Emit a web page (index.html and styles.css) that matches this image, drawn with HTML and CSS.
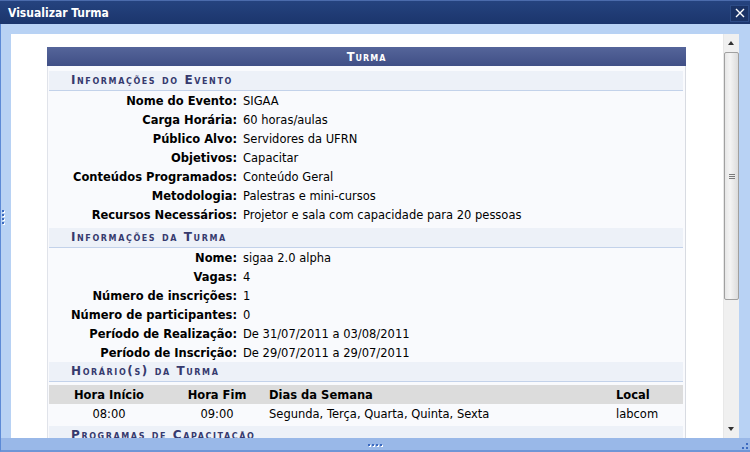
FILE: index.html
```html
<!DOCTYPE html>
<html>
  <head>
    <meta charset="utf-8" />
    <title>Visualizar Turma</title>
    <link rel="stylesheet" href="styles.css">
  </head>
  <body>
    <div class="window">
      <div class="titlebar">
        <span class="title">Visualizar Turma</span>
        <span class="close">
          <svg width="10" height="10" viewBox="0 0 10 10"><path d="M1 1L9 9M9 1L1 9" stroke="#fff" stroke-width="1.4"/></svg>
        </span>
      </div>

      <div class="frame">
        <span class="grip-left"><i></i><i></i><i></i><i></i></span>
        <div class="viewport">
          <div class="content">
            <div class="formulario">
              <div class="caption">Turma</div>
              <div class="corpo">
                <div class="subtitulo">Informações do Evento</div>
                <table class="dados">
                  <tr><th>Nome do Evento:</th><td>SIGAA</td></tr>
                  <tr><th>Carga Horária:</th><td>60 horas/aulas</td></tr>
                  <tr><th>Público Alvo:</th><td>Servidores da UFRN</td></tr>
                  <tr><th>Objetivos:</th><td>Capacitar</td></tr>
                  <tr><th>Conteúdos Programados:</th><td>Conteúdo Geral</td></tr>
                  <tr><th>Metodologia:</th><td>Palestras e mini-cursos</td></tr>
                  <tr><th>Recursos Necessários:</th><td>Projetor e sala com capacidade para 20 pessoas</td></tr>
                </table>

                <div class="subtitulo">Informações da Turma</div>
                <table class="dados ultimo">
                  <tr><th>Nome:</th><td>sigaa 2.0 alpha</td></tr>
                  <tr><th>Vagas:</th><td>4</td></tr>
                  <tr><th>Número de inscrições:</th><td>1</td></tr>
                  <tr><th>Número de participantes:</th><td>0</td></tr>
                  <tr><th>Período de Realização:</th><td>De 31/07/2011 a 03/08/2011</td></tr>
                  <tr><th>Período de Inscrição:</th><td>De 29/07/2011 a 29/07/2011</td></tr>
                </table>

                <div class="subtitulo">Horário(s) da Turma</div>
                <table class="listagem">
                  <thead>
                    <tr>
                      <th class="c1">Hora Início</th>
                      <th class="c2">Hora Fim</th>
                      <th class="c3">Dias da Semana</th>
                      <th class="c4">Local</th>
                    </tr>
                  </thead>
                  <tbody>
                    <tr>
                      <td class="c1">08:00</td>
                      <td class="c2">09:00</td>
                      <td class="c3">Segunda, Terça, Quarta, Quinta, Sexta</td>
                      <td class="c4">labcom</td>
                    </tr>
                  </tbody>
                </table>

                <div class="subtitulo">Programas de Capacitação</div>
              </div>
            </div>
          </div>

          <div class="scrollbar">
            <div class="arrow up"></div>
            <div class="track">
              <div class="thumb"><span class="lines"></span></div>
            </div>
            <div class="arrow down"></div>
          </div>
        </div>
      </div>

      <div class="statusbar">
        <span class="grip-bottom"><i></i><i></i><i></i><i></i></span>
        <span class="grip-corner"></span>
      </div>
    </div>
  </body>
</html>
```

FILE: styles.css
```css
html, body {
  margin: 0;
  padding: 0;
}

body {
  font-family: "DejaVu Sans", Verdana, sans-serif;
  font-size: 11.5px;
  color: #000;
}

.window {
  width: 750px;
  height: 452px;
  display: flex;
  flex-direction: column;
  overflow: hidden;
}

/* title bar */
.titlebar {
  height: 24px;
  box-sizing: border-box;
  border-top: 1px solid #4b6bac;
  background: linear-gradient(#25437f, #1b356c);
  display: flex;
  align-items: center;
  justify-content: space-between;
  padding: 0 1px 0 8px;
}
.title {
  color: #fff;
  font-weight: bold;
  font-size: 12px;
  font-family: "DejaVu Sans Condensed", "DejaVu Sans", sans-serif;
}
.close {
  width: 17px;
  height: 15px;
  background: #1a3265;
  border: 1px solid #2c4b86;
  display: flex;
  align-items: center;
  justify-content: center;
  margin-top: 1px;
}

/* frame */
.frame {
  flex: 1;
  display: flex;
  min-height: 0;
  background: #b8d2f4;
  border-left: 1px solid #5c8ad6;
  padding: 10px 11px 0 10px;
  position: relative;
}
.grip-left {
  position: absolute;
  left: 1px;
  top: 186px;
  display: flex;
  flex-direction: column;
  gap: 2px;
}
.grip-left i, .grip-bottom i {
  display: block;
  width: 2px;
  height: 2px;
  background: #3c6ac0;
  box-shadow: 1px 1px 0 #fff;
}

.viewport {
  flex: 1;
  display: flex;
  background: #fff;
  min-height: 0;
}
.content {
  flex: 1;
  padding: 13px 0 0 36px;
  overflow: hidden;
}

/* form */
.formulario {
  width: 639px;
}
.caption {
  height: 19px;
  line-height: 20px;
  background: linear-gradient(#55659a, #404f86);
  color: #fff;
  font-weight: bold;
  font-variant: small-caps;
  text-align: center;
  letter-spacing: 1px;
  font-size: 11.5px;
}
.corpo {
  background: #f9fafd;
  border-left: 1px solid #e0e3ea;
  border-right: 1px solid #d8dbe2;
  padding: 5px 2px 0 1px;
}
.subtitulo {
  height: 19px;
  line-height: 19px;
  background: #edf1f8;
  border-bottom: 1px solid #c3d2ea;
  color: #363a6e;
  font-weight: bold;
  font-variant: small-caps;
  letter-spacing: 1.6px;
  padding-left: 22px;
  font-size: 12px;
}

table {
  border-collapse: collapse;
  width: 100%;
}
.dados {
  margin-bottom: 4px;
}
.dados.ultimo {
  margin-bottom: 0;
}
.dados th, .dados td {
  height: 19px;
  padding: 0;
  white-space: nowrap;
}
.dados th {
  width: 188px;
  text-align: right;
  padding-right: 6px;
}

.listagem {
  margin: 3px 0;
}
.listagem th {
  background: #dcdcdc;
  height: 19px;
  padding: 0 4px;
  text-align: left;
}
.listagem td {
  height: 19px;
  padding: 0 4px;
}
.listagem .c1 {
  width: 112px;
  text-align: center;
}
.listagem .c2 {
  width: 88px;
  text-align: center;
}
.listagem .c4 {
  width: 63px;
}

/* scrollbar */
.scrollbar {
  width: 16px;
  display: flex;
  flex-direction: column;
  background: #f0f0f0;
  border-left: 1px solid #e8e8e8;
  box-sizing: border-box;
}
.arrow {
  height: 18px;
  position: relative;
}
.arrow::after {
  content: "";
  position: absolute;
  left: 4px;
  border-left: 3.5px solid transparent;
  border-right: 3.5px solid transparent;
}
.arrow.up::after {
  top: 7px;
  border-bottom: 4px solid #303030;
}
.arrow.down::after {
  top: 7px;
  border-top: 4px solid #303030;
}
.track {
  flex: 1;
}
.thumb {
  height: 248px;
  box-sizing: border-box;
  border: 1px solid #a0a0a0;
  border-radius: 2px;
  background: linear-gradient(90deg, #e6e6e6, #f4f4f4 40%, #dcdcdc);
  display: flex;
  align-items: center;
  justify-content: center;
}
.lines {
  width: 6px;
  height: 5px;
  background: repeating-linear-gradient(#7a7a7a 0 1px, transparent 1px 2px);
}

/* status bar */
.statusbar {
  height: 14px;
  box-sizing: border-box;
  background: #99b8e8;
  border-left: 1px solid #5c8ad6;
  border-bottom: 2px solid #6f96d6;
  position: relative;
}
.grip-bottom {
  position: absolute;
  left: 367px;
  top: 6px;
  display: flex;
  gap: 2px;
}
.grip-corner {
  position: absolute;
  right: 2px;
  bottom: 1px;
  width: 6px;
  height: 6px;
  background:
    linear-gradient(#3c6ac0, #3c6ac0) 4px 0 / 2px 2px no-repeat,
    linear-gradient(#3c6ac0, #3c6ac0) 0 4px / 2px 2px no-repeat,
    linear-gradient(#3c6ac0, #3c6ac0) 4px 4px / 2px 2px no-repeat;
}
```
